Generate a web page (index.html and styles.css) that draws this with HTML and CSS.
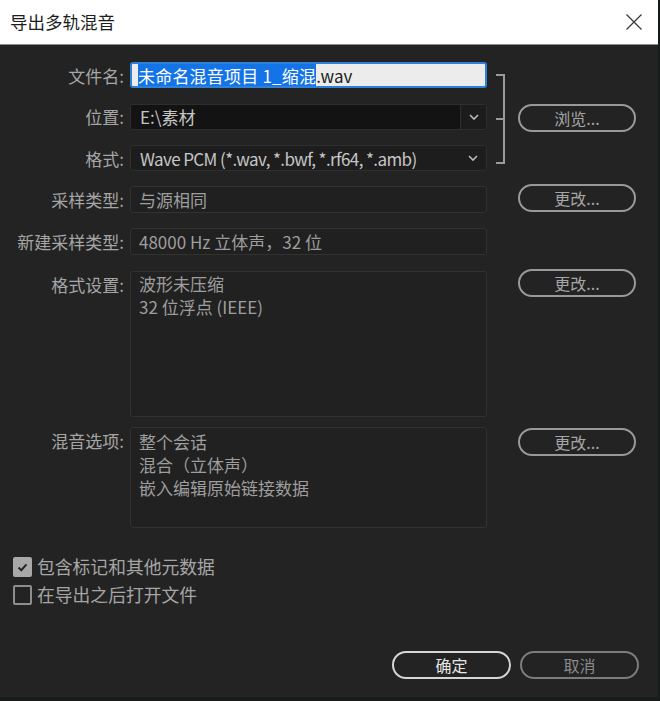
FILE: index.html
```html
<!DOCTYPE html>
<html lang="zh-CN">
<head>
<meta charset="utf-8">
<title>导出多轨混音</title>
<link rel="stylesheet" href="styles.css">
</head>
<body>
<div class="dialog">
  <header class="titlebar">
    <span class="title">导出多轨混音</span>
    <svg class="close" width="18" height="18" viewBox="0 0 18 18"><path d="M1.5 1.5 L16.5 16.5 M16.5 1.5 L1.5 16.5" stroke="#3a3a3a" stroke-width="1.3" fill="none"/></svg>
  </header>
  <main class="content">
    <div class="top-group">
      <div class="lbl g-r1">文件名:</div>
      <div class="field name g-r1"><span class="sel">未命名混音项目 1_缩混</span>.wav</div>
      <div class="bracket"></div>
      <div class="lbl g-r2">位置:</div>
      <div class="field select loc g-r2"><span class="val">E:\素材</span><span class="arrow"><svg width="12" height="8" viewBox="0 0 12 8"><path d="M2 2 L6 6 L10 2" stroke="#b8b8b8" stroke-width="1.6" fill="none"/></svg></span></div>
      <button class="btn g-r2 g-btn">浏览...</button>
      <div class="lbl g-r3">格式:</div>
      <div class="field select fmt g-r3"><span class="val latin">Wave PCM (*.wav, *.bwf, *.rf64, *.amb)</span><span class="arrow"><svg width="12" height="8" viewBox="0 0 12 8"><path d="M2 2 L6 6 L10 2" stroke="#b8b8b8" stroke-width="1.6" fill="none"/></svg></span></div>
    </div>

    <div class="row row-sample">
      <div class="lbl">采样类型:</div>
      <div class="field ro">与源相同</div>
      <div></div>
      <button class="btn">更改...</button>
    </div>

    <div class="row row-new">
      <div class="lbl">新建采样类型:</div>
      <div class="field ro">48000 Hz 立体声，32 位</div>
    </div>

    <div class="row row-fmt">
      <div class="lbl top">格式设置:</div>
      <div class="box fmtbox"><div>波形未压缩</div><div>32 位浮点 (IEEE)</div></div>
      <div></div>
      <button class="btn">更改...</button>
    </div>

    <div class="row row-mix">
      <div class="lbl top">混音选项:</div>
      <div class="box mixbox"><div>整个会话</div><div>混合（立体声）</div><div>嵌入编辑原始链接数据</div></div>
      <div></div>
      <button class="btn">更改...</button>
    </div>
  </main>

  <div class="checks">
    <div class="check"><span class="cb on"><svg width="19" height="19" viewBox="0 0 19 19"><path d="M4.5 9.5 L8 13 L14.5 5.5" stroke="#262626" stroke-width="2.6" fill="none"/></svg></span><span>包含标记和其他元数据</span></div>
    <div class="check"><span class="cb"></span><span>在导出之后打开文件</span></div>
  </div>

  <footer class="footer">
    <button class="btn primary">确定</button>
    <button class="btn cancel">取消</button>
  </footer>
</div>
</body>
</html>
```

FILE: styles.css
```css
* { box-sizing: border-box; }
html, body { margin: 0; padding: 0; }
body {
  background: #171b19;
  width: 660px;
  height: 701px;
  overflow: hidden;
  font-family: "Noto Sans CJK SC", "Noto Sans", sans-serif;
}
.dialog {
  width: 658px;
  height: 697px;
  background: #232323;
  display: flex;
  flex-direction: column;
}
.titlebar {
  height: 45px;
  background: #ffffff;
  border-bottom: 1px solid #8c8c8c;
  display: flex;
  align-items: center;
  justify-content: space-between;
  padding: 0 15px 0 10px;
}
.title {
  font-size: 17.5px;
  color: #1e1e1e;
  line-height: 1;
}
.close { display: block; }

.content {
  padding: 17px 0 0 12px;
}
.top-group, .row {
  display: grid;
  grid-template-columns: 118px 357px 31px 118px;
}
.top-group {
  grid-template-rows: 26px 26px 26px;
  row-gap: 15.5px;
}
.top-group .lbl { grid-column: 1; }
.top-group .field { grid-column: 2; }
.g-r1 { grid-row: 1; }
.g-r2 { grid-row: 2; }
.g-r3 { grid-row: 3; }
.top-group .g-btn { grid-column: 4; }

.lbl {
  font-size: 17px;
  color: #a6a6a6;
  text-align: right;
  padding-right: 6px;
  align-self: center;
  line-height: 1;
  white-space: nowrap;
}
.lbl.top { align-self: start; padding-top: 5px; }

.field {
  font-size: 17px;
  line-height: 1;
  border-radius: 3px;
  display: flex;
  align-items: center;
  white-space: nowrap;
  overflow: hidden;
}
.field.name {
  background: #ececec;
  border: 2px solid #2f80d8;
  color: #222;
  padding-left: 6px;
}
.sel {
  background: #1473e6;
  color: #ffffff;
  padding: 3px 0 2px;
  letter-spacing: 0.2px;
}
.field.select {
  border: 1px solid #2e2e2e;
  color: #c6c6c6;
  justify-content: space-between;
}
.field.loc { background: #131313; }
.field.fmt { background: #1d1d1d; }
.field.select .val { padding-left: 9px; }
.field.select .val.latin { letter-spacing: -0.6px; }
.arrow {
  width: 26px;
  height: 100%;
  flex: none;
  display: flex;
  align-items: center;
  justify-content: center;
  background: #1c1c1c;
}
.field.loc .arrow { border-left: 1px solid #2e2e2e; }
.field.fmt .arrow { background: transparent; }

.bracket {
  grid-column: 3;
  grid-row: 1 / 4;
  margin: 12px 0 7px 9px;
  width: 9px;
  border: 2px solid #9a9a9a;
  border-left: none;
  display: flex;
  align-items: center;
}
.bracket::before {
  content: "";
  display: block;
  width: 8px;
  height: 2px;
  background: #9a9a9a;
}

.btn {
  height: 28px;
  border: 2px solid #999999;
  border-radius: 14px;
  background: transparent;
  color: #a6a6a6;
  font-family: "Noto Sans CJK SC", "Noto Sans", sans-serif;
  font-size: 16px;
  line-height: 1;
  padding: 0;
  display: flex;
  align-items: center;
  justify-content: center;
}
.row .btn { grid-column: 4; align-self: start; }

.field.ro {
  height: 27px;
  background: #202020;
  border: 1px solid #323232;
  color: #9e9e9e;
  padding-left: 8px;
}
.row-sample { margin-top: 15px; }
.row-sample .btn { margin-top: -2px; }
.row-new { margin-top: 15px; }
.row-fmt { margin-top: 16px; }
.row-fmt .btn { margin-top: -2px; }
.row-mix { margin-top: 10px; }
.row-mix .btn { margin-top: 1px; }

.box {
  background: #212121;
  border: 1px solid #323232;
  border-radius: 3px;
  color: #9e9e9e;
  font-size: 17px;
  line-height: 23px;
  padding: 0 0 0 8px;
}
.fmtbox { height: 146px; }
.mixbox { height: 101px; padding-top: 2px; }

.checks {
  margin-top: 29px;
  padding-left: 13px;
  display: flex;
  flex-direction: column;
  gap: 8px;
}
.check {
  display: flex;
  align-items: center;
  gap: 5px;
  font-size: 17.8px;
  color: #a6a6a6;
  line-height: 1;
}
.cb {
  width: 19px;
  height: 20px;
  border: 2px solid #8e8e8e;
  border-radius: 2px;
  display: flex;
  align-items: center;
  justify-content: center;
}
.cb.on {
  background: #a8a8a8;
  border-color: #a8a8a8;
}
.cb svg { display: block; }

.footer {
  margin-top: 46px;
  display: flex;
  justify-content: flex-end;
  gap: 9px;
  padding-right: 19px;
}
.footer .btn { width: 119px; }
.btn.primary {
  border-color: #d6d6d6;
  color: #e6e6e6;
}
.btn.cancel {
  border-color: #7c7c7c;
  color: #8a8a8a;
}
```
